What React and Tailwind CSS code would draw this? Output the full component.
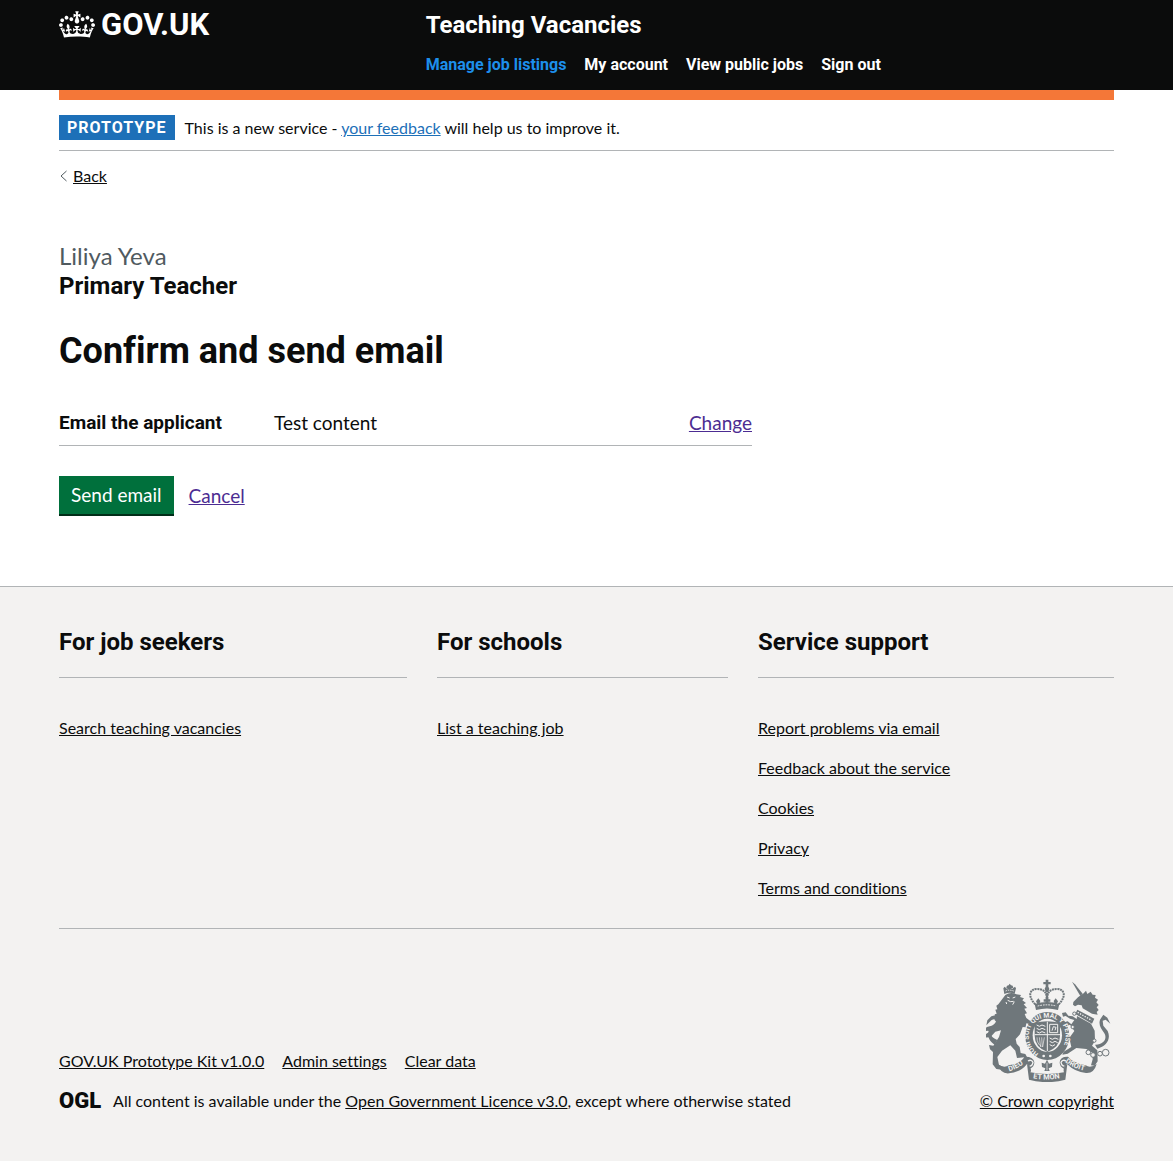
const crownPath =
  "M25 30.2c3.5 1.5 7.7-.2 9.1-3.7 1.5-3.6-.2-7.8-3.9-9.2-3.6-1.4-7.6.3-9.1 3.9-1.4 3.5.3 7.5 3.9 9zM9 39.5c3.6 1.5 7.8-.2 9.2-3.7 1.5-3.6-.2-7.8-3.9-9.1-3.6-1.5-7.6.2-9.1 3.8-1.4 3.5.3 7.5 3.8 9zM4.4 57.2c3.5 1.5 7.7-.2 9.1-3.8 1.5-3.6-.2-7.7-3.9-9.1-3.5-1.5-7.6.3-9.1 3.8-1.4 3.5.3 7.6 3.9 9.1zm38.3-21.4c3.5 1.5 7.7-.2 9.1-3.8 1.5-3.6-.2-7.7-3.9-9.1-3.6-1.5-7.6.3-9.1 3.8-1.3 3.6.4 7.7 3.9 9.1zm64.4-5.6c-3.6 1.5-7.8-.2-9.1-3.7-1.5-3.6.2-7.8 3.8-9.2 3.6-1.4 7.7.3 9.2 3.9 1.3 3.5-.4 7.5-3.9 9zm15.9 9.3c-3.6 1.5-7.7-.2-9.1-3.7-1.5-3.6.2-7.8 3.7-9.1 3.6-1.5 7.7.2 9.2 3.8 1.5 3.5-.3 7.5-3.8 9zm4.7 17.7c-3.6 1.5-7.8-.2-9.2-3.8-1.5-3.6.2-7.7 3.9-9.1 3.6-1.5 7.7.3 9.2 3.8 1.3 3.5-.4 7.6-3.9 9.1zM89.3 35.8c-3.6 1.5-7.8-.2-9.2-3.8-1.4-3.6.2-7.7 3.9-9.1 3.6-1.5 7.7.3 9.2 3.8 1.4 3.6-.3 7.7-3.9 9.1zM69.7 17.7l8.9 4.7V9.3l-8.9 2.8c-.2-.3-.5-.6-.9-.9L72.4 0H59.6l3.5 11.2c-.3.3-.6.5-.9.9l-8.8-2.8v13.1l8.8-4.7c.3.3.6.7.9.9l-5 15.4v.1c-.2.8-.4 1.6-.4 2.4 0 4.1 3.1 7.5 7 8.1h.2c.3 0 .7.1 1 .1.4 0 .7 0 1-.1h.2c4-.6 7.1-4.1 7.1-8.1 0-.8-.1-1.7-.4-2.4V34l-5.1-15.4c.4-.2.7-.6 1-.9zM66 92.8c16.9 0 32.8 1.1 47.1 3.2 4-16.9 8.9-26.7 14-33.5l-9.6-3.4c1 4.9 1.1 7.2 0 10.2-1.5-1.4-3-4.3-4.2-8.7L108.6 76c2.8-2 5-3.2 7.5-3.3-4.4 9.4-10 11.9-13.6 11.2-4.3-.8-6.3-4.6-5.6-7.9 1-4.7 5.7-5.9 8-.5 4.3-8.7-3-11.4-7.6-8.8 7.1-7.2 7.9-13.5 2.1-21.1-8 6.1-8.1 12.3-4.5 20.8-4.7-5.4-12.1-2.5-9.5 6.2 3.4-5.2 7.9-2 7.2 3.1-.6 4.3-6.4 7.8-13.5 7.2-10.3-.9-10.9-8-11.2-13.8 2.5-.5 7.1 1.8 11 7.3L80.2 60c-4.1 4.4-8 5.3-12.3 5.4 1.4-4.4 8-11.6 8-11.6H55.5s6.4 7.2 7.9 11.6c-4.2-.1-8-1-12.3-5.4l1.4 16.4c3.9-5.5 8.5-7.7 10.9-7.3-.3 5.8-.9 12.8-11.1 13.8-7.2.6-12.9-2.9-13.5-7.2-.7-5 3.8-8.3 7.1-3.1 2.7-8.7-4.6-11.6-9.4-6.2 3.7-8.5 3.6-14.7-4.6-20.8-5.8 7.6-5 13.9 2.2 21.1-4.7-2.6-11.9.1-7.7 8.8 2.3-5.5 7.1-4.2 8.1.5.7 3.3-1.3 7.1-5.7 7.9-3.5.7-9-1.8-13.5-11.2 2.5.1 4.7 1.3 7.5 3.3l-4.7-15.4c-1.2 4.4-2.7 7.2-4.3 8.7-1.1-3-.9-5.3 0-10.2l-9.5 3.4c5 6.9 9.9 16.7 14 33.5 14.8-2.1 30.8-3.2 47.7-3.2z";

const navItems = ["Manage job listings", "My account", "View public jobs", "Sign out"];

const footerSections = [
  { title: "For job seekers", links: ["Search teaching vacancies"] },
  { title: "For schools", links: ["List a teaching job"] },
  {
    title: "Service support",
    links: [
      "Report problems via email",
      "Feedback about the service",
      "Cookies",
      "Privacy",
      "Terms and conditions",
    ],
  },
];

const metaLinks = ["GOV.UK Prototype Kit v1.0.0", "Admin settings", "Clear data"];

function RoyalArms() {
  const bg = "#f3f2f1";
  return (
    <svg viewBox="48 40 375 309" className="mr-[3px] h-[103px] w-[125px] text-[#6f777b]" fill="currentColor" aria-hidden="true">
      {/* centre crown */}
      <path d="M227 42h8v7h7v7h-7v8h-8v-8h-7v-7h7z" />
      <circle cx="231" cy="70" r="7" />
      <g fill="none" stroke="currentColor">
        <path d="M196 116C172 92 178 69 202 70 218 70 228 77 230 92" strokeWidth="6" strokeDasharray="6 2" />
        <path d="M266 116C290 92 284 69 260 70 244 70 234 77 232 92" strokeWidth="6" strokeDasharray="6 2" />
        <path d="M231 74V106" strokeWidth="7" strokeDasharray="6 2" />
      </g>
      <path d="M194 115q37-12 74 0l-4 18q-33-9-66 0z" />
      <path d="M203 121q28-7 56 0" fill="none" stroke={bg} strokeWidth="3" strokeDasharray="5 3" />
      <path d="M227 94h8v7h6v7h-6v6h-8v-6h-6v-7h6zM205 98l6 8-3 9h-6l-4-8zM257 98l-6 8 3 9h6l4-8z" />

      {/* lion */}
      <path d="M100 68l4-5 4 4 3-7 5-1 3-5 4 5 5 1 2 7 5-4 3 5-4 16q-15-6-31 1z" />
      <path d="M107 76q11-5 24 0M109 67l5 4M128 67l-4 4" fill="none" stroke={bg} strokeWidth="3" strokeDasharray="4 3" />
      <path d="M106 88Q122 77 139 86l14 2-3 6 12 4-5 6 11 8-7 4 10 11-8 2 8 14-7 2 5 12 15 11-2 11-13-6-2 12-9-1-8 22-13 14 3 14 9 10 3 18 14 3 5 9-30 3-5-22-15-16-25 16-14 19 5 24 12 6 2 9-22-3-11-14 1-37-9-8-3-13 13 2 17-26 6-20-17 4-15 17-19 1 1-8 13-8 6-2-8-3-9 1-1-7 7-5 19-5 9-10-6-7 4-5-3-11 6-2-4-12 6-1-3-11 6-4z" />
      <path d="M111 94l8 3M128 97l8-3M113 104l9 4 9-1M108 109l2 6M133 108l-5 9" fill="none" stroke={bg} strokeWidth="3" />
      <path d="M74 237C45 218 52 190 70 177 85 166 79 155 64 164l-15 15 3-15 12-12 14-4 8 9-1 15-13 13C58 201 58 213 82 223z" />

      {/* unicorn */}
      <path d="M306 48l9 8 23 28-7 7z" />
      <path d="M332 89l9-6 7-8 4 10 10-7 6 9 9 1-2 8 9 6-5 8 7 8-6 7 6 8-6 6 3 8-17-3-28-16-3-9-11-2-9 5-6-5 1-8 14-14z" />
      <path d="M322 132l51 27-7 15-50-29z" />
      <path d="M323 140l42 24" fill="none" stroke={bg} strokeWidth="4" strokeDasharray="4 4" />
      <path d="M321 151l42 23 11 21 1 30-9 15 16 14 1 33-9 13-11-1 5-18-1-20-18-11-30-3-26 17-16 3 4-9 23-14-4-18-16-9 18-6 11-15-13-19-14 6-3-13 10-3 11 9 9-13-13-4-13-8-8 2-3-11 11-2 8 10 13 2 12 8-1 10z" />
      <path d="M375 237C400 238 413 219 403 203 393 188 385 178 390 162l10-15 12 9 9 18-14-12-9 3 2 15 13 16C424 220 409 242 382 249z" />
      <g fill={bg} stroke="currentColor" strokeWidth="3">
        <circle cx="313" cy="144" r="5" />
        <circle cx="308" cy="184" r="5" />
        <circle cx="355" cy="260" r="7" />
        <circle cx="369" cy="268" r="7" />
        <circle cx="390" cy="264" r="7" />
        <circle cx="407" cy="261" r="10" />
        <circle cx="373" cy="225" r="5" />
      </g>

      {/* garter and shield */}
      <ellipse cx="232" cy="211" rx="66" ry="72" />
      <ellipse cx="232" cy="209" rx="44" ry="50" fill={bg} />
      <path d="M194 171q37-9 76 0v40q0 33-38 48-38-15-38-48z" />
      <path d="M232 168v88M194 207h76" stroke={bg} strokeWidth="3" />
      <g fill="none" stroke={bg} strokeWidth="3">
        <path d="M200 178l8 4 8-4 10 4M200 188l8 4 8-4 10 4M200 198l8 4 8-4 10 4" />
        <path d="M239 176h24v25h-24zM246 195l4-12 8 2-3 9" />
        <path d="M201 215q0 20 13 27M208 215l4 29M215 215l2 29M223 215l-5 29" strokeWidth="2" />
        <path d="M239 217l8 4 8-4 10 4M239 227l8 4 8-4 8 4M239 237l8 4 8-4" />
      </g>
      <defs>
        <path id="garter" d="M206 264C160 236 168 156 232 156S304 236 258 264" />
        <path id="ribbonLeft" d="M118 317Q148 308 170 286" />
        <path id="ribbonCentre" d="M189 338Q231 346 278 336" />
        <path id="ribbonRight" d="M285 289Q314 311 356 318" />
      </defs>
      <g fill={bg} fontFamily="Roboto, sans-serif" fontWeight="700" fontSize="20">
        <text><textPath href="#garter">HONI SOIT QUI MAL Y PENSE</textPath></text>
      </g>
      <circle cx="221" cy="271" r="4" fill={bg} />
      <circle cx="241" cy="271" r="4" fill={bg} />

      {/* motto ribbon */}
      <path d="M83 295q19 14 33 4 39-8 47-26 28-1 30 17 0 14-13 19l-9-14q-18 24-54 28-26 2-34-28z" />
      <path d="M380 295q-19 14-33 4-39-8-53-26-24-1-25 17 0 14 13 19l9-14q24 24 57 27 24 2 32-27z" />
      <path d="M174 286q10-6 15 4-2 11-10 11M288 286q-10-6-15 4 2 11 10 11" fill="none" stroke={bg} strokeWidth="4" />
      <path d="M171 295q17 16 10 25 50 10 101 0-5-12 10-25l-6 47q-54 15-109 0z" />
      <path d="M231 282l6 12 10-3-1 13-10 4 3 8h-16l3-8-10-4-1-13 10 3z" />
      <path d="M231 291v23" stroke={bg} strokeWidth="2" />
      <g fill={bg} fontFamily="Roboto, sans-serif" fontWeight="700" fontSize="22">
        <text><textPath href="#ribbonLeft">DIEU</textPath></text>
        <text><textPath href="#ribbonCentre">ET MON</textPath></text>
        <text><textPath href="#ribbonRight">DROIT</textPath></text>
      </g>
    </svg>
  );
}

export default function App() {
  return (
    <div className="bg-white font-[Lato,sans-serif] text-base leading-5 text-[#0b0c0c] [font-variant-ligatures:none]">
      <header className="bg-[#0b0c0c] px-[59px] font-[Roboto,sans-serif] text-white">
        <div className="flex h-[90px] items-start gap-[15px]">
          <div className="w-1/3 pt-2">
            <a href="#" className="inline-flex items-center gap-[6px] text-[31px] leading-[30px] font-bold">
              <svg viewBox="0 0 132 97" className="h-[27px] w-9" fill="currentColor" aria-hidden="true">
                <path fillRule="evenodd" d={crownPath} />
              </svg>
              <span className="pt-[2px]">GOV.UK</span>
            </a>
          </div>
          <div className="pt-[10px]">
            <a href="#" className="block text-2xl leading-[30px] font-bold">Teaching Vacancies</a>
            <nav aria-label="Service" className="mt-[15px]">
              <ul className="flex flex-wrap gap-x-[18px]">
                {navItems.map((item, i) => (
                  <li key={item}>
                    <a href="#" className={i === 0 ? "font-bold text-[#1d8feb]" : "font-bold"}>{item}</a>
                  </li>
                ))}
              </ul>
            </nav>
          </div>
        </div>
      </header>

      <div className="px-[59px]">
        <div className="h-[10px] bg-[#f47738]" />
        <div className="flex items-center gap-[10px] border-b border-[#b1b4b6] pt-[15px] pb-[10px]">
          <strong className="bg-[#1d70b8] px-2 font-[Roboto,sans-serif] leading-[25px] font-bold tracking-[1px] text-white">PROTOTYPE</strong>
          <span>
            This is a new service - <a href="#" className="text-[#1d70b8] underline">your feedback</a> will help us to improve it.
          </span>
        </div>
        <a href="#" className="mt-[15px] inline-flex items-center gap-[5px]">
          <svg viewBox="0 0 9 12" className="h-3 w-[9px] text-[#505a5f]" fill="none" stroke="currentColor" aria-hidden="true">
            <path d="M7.500 1L2 6l5.500 5" />
          </svg>
          <span className="underline">Back</span>
        </a>

        <main className="pt-[55px] pb-[70px]">
          <p className="text-2xl leading-[30px] text-[#505a5f]">Liliya Yeva</p>
          <h2 className="font-[Roboto,sans-serif] text-2xl leading-[30px] font-bold">Primary Teacher</h2>
          <h1 className="mt-[30px] font-[Roboto,sans-serif] text-4xl leading-10 font-bold">Confirm and send email</h1>
          <dl className="mt-[39px] flex w-[693px] max-w-full border-b border-[#b1b4b6] pb-[10px] text-[19px] leading-[25px]">
            <dt className="w-[215px] font-[Roboto,sans-serif] font-bold">Email the applicant</dt>
            <dd className="flex-1">Test content</dd>
            <dd>
              <a href="#" className="text-[#4c2c92] underline">Change</a>
            </dd>
          </dl>
          <div className="mt-[30px] flex items-center gap-[15px] text-[19px]">
            <button type="button" className="h-10 border-b-2 border-[#002d18] bg-[#00703c] px-3 text-white">Send email</button>
            <a href="#" className="text-[#4c2c92] underline">Cancel</a>
          </div>
        </main>
      </div>

      <footer className="border-t border-[#b1b4b6] bg-[#f3f2f1] px-[59px] pt-[40px] pb-[50px]">
        <div className="grid grid-cols-[348fr_291fr_356fr] gap-[30px] border-b border-[#b1b4b6] pb-[30px]">
          {footerSections.map((section) => (
            <section key={section.title}>
              <h2 className="border-b border-[#b1b4b6] pb-[20px] font-[Roboto,sans-serif] text-2xl leading-[30px] font-bold">{section.title}</h2>
              <ul className="mt-[40px] flex flex-col gap-5">
                {section.links.map((link) => (
                  <li key={link}>
                    <a href="#" className="underline">{link}</a>
                  </li>
                ))}
              </ul>
            </section>
          ))}
        </div>
        <div className="mt-[50px] flex items-end justify-between">
          <div>
            <ul className="flex flex-wrap gap-x-[18px]">
              {metaLinks.map((link) => (
                <li key={link}>
                  <a href="#" className="underline">{link}</a>
                </li>
              ))}
            </ul>
            <div className="mt-5 flex items-center gap-3">
              <span className="font-[Roboto,sans-serif] text-[22px] leading-5 font-black">OGL</span>
              <span>
                All content is available under the <a href="#" className="underline">Open Government Licence v3.0</a>, except where otherwise stated
              </span>
            </div>
          </div>
          <a href="#" className="flex flex-col items-end gap-[9px]">
            <RoyalArms />
            <span className="underline">© Crown copyright</span>
          </a>
        </div>
      </footer>
    </div>
  );
}
